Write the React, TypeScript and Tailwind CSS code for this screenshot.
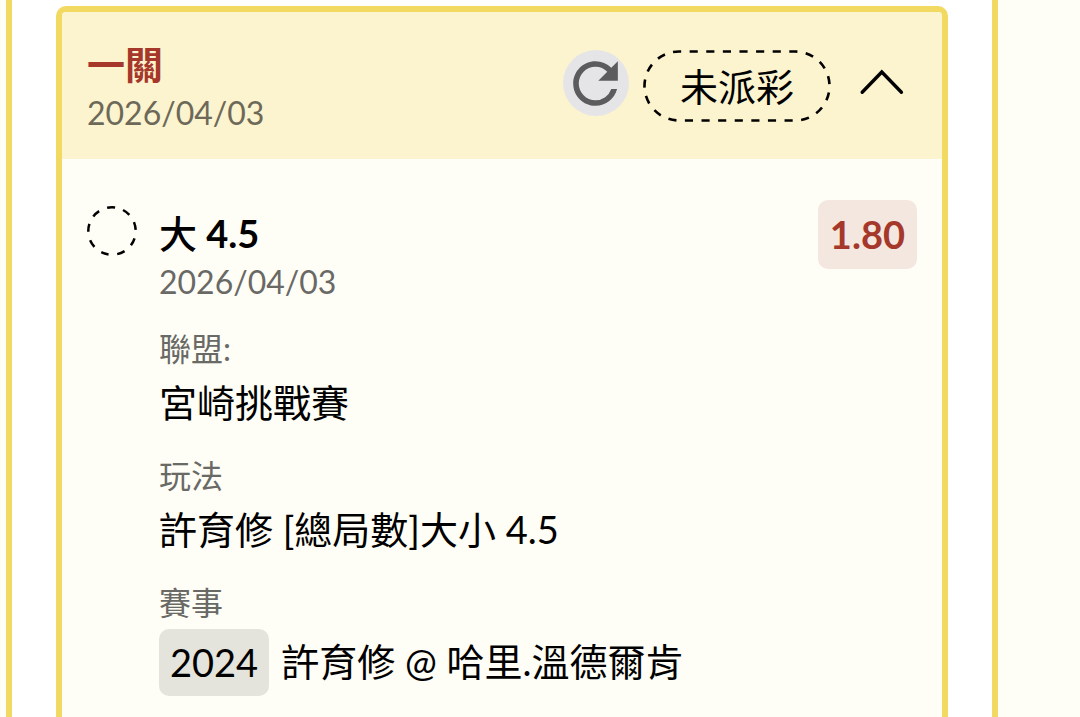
import { ReactNode, useState } from "react";

function RefreshIcon() {
  return (
    <svg viewBox="0 0 24 24" className="size-[67px] shrink-0 fill-[#5c5c5e]" aria-hidden="true">
      <path d="M17.65 6.35A7.958 7.958 0 0 0 12 4c-4.42 0-7.99 3.58-7.99 8s3.57 8 7.99 8c3.73 0 6.84-2.55 7.73-6h-2.08A5.99 5.99 0 0 1 12 18c-3.31 0-6-2.69-6-6s2.69-6 6-6c1.66 0 3.14.69 4.22 1.78L13 11h7V4l-2.35 2.35z" />
    </svg>
  );
}

function StatusPill({ children }: { children: ReactNode }) {
  return (
    <span className="relative flex h-[72px] items-center px-[37px] text-[38px]">
      <svg
        viewBox="0 0 188 72"
        preserveAspectRatio="none"
        className="absolute inset-0 size-full fill-none stroke-black"
        aria-hidden="true"
      >
        <rect
          x="1.5"
          y="1.5"
          width="185"
          height="69"
          rx="34.5"
          strokeWidth="2.6"
          pathLength="270"
          strokeDasharray="4.9 5.1"
          strokeDashoffset="3.6"
        />
      </svg>
      {children}
    </span>
  );
}

function PendingCircle() {
  return (
    <svg viewBox="0 0 50 50" className="mt-1.5 size-[50px] shrink-0 fill-none stroke-black" aria-hidden="true">
      <circle
        cx="25"
        cy="25"
        r="23.7"
        strokeWidth="2.5"
        pathLength="90"
        strokeDasharray="4.8 5.2"
        transform="rotate(18 25 25)"
      />
    </svg>
  );
}

function Field({ label, children }: { label: string; children: ReactNode }) {
  return (
    <div>
      <dt className="text-[32px] leading-[44px] text-[#696966]">{label}</dt>
      <dd className="flex min-h-[62px] items-center text-[38px] leading-[62px]">{children}</dd>
    </div>
  );
}

export default function App() {
  const [open, setOpen] = useState(true);

  return (
    <div className="h-screen overflow-hidden bg-[#fffef6] pr-[82px] pl-1.5 font-['Lato','Noto_Sans_CJK_TC',sans-serif] text-black">
      <main className="flex min-h-full flex-col border-x-6 border-[#f2d961] bg-white px-11 pt-1.5">
        <article className="flex grow flex-col rounded-t-[10px] border-6 border-b-0 border-[#f2d961] bg-[#fffef6]">
          <header className="flex items-start justify-between rounded-t-[4px] bg-[#fcf3cf] px-[25px] pt-[27px] pb-[22px]">
            <div>
              <h2 className="text-[38px] leading-[50px] font-bold text-[#a5382a]">一關</h2>
              <time className="block text-[32px] leading-[48px] text-[#6c6958]">2026/04/03</time>
            </div>
            <div className="mt-[11px] flex items-center">
              <button
                type="button"
                aria-label="重新整理"
                className="mr-3.5 mb-1.5 flex size-[66px] items-center justify-center rounded-full bg-[#e5e5e8]"
              >
                <RefreshIcon />
              </button>
              <StatusPill>未派彩</StatusPill>
              <button
                type="button"
                aria-label="收合"
                aria-expanded={open}
                onClick={() => setOpen(!open)}
                className="mr-3 ml-6 flex h-[72px] w-[50px] items-center justify-center"
              >
                <svg
                  viewBox="0 0 50 50"
                  className="mb-2 size-[50px] fill-none stroke-black"
                  strokeWidth="3.4"
                  aria-hidden="true"
                >
                  <path d="M7.200 35.200 26.800 15 46.400 35.200" strokeLinecap="round" />
                </svg>
              </button>
            </div>
          </header>

          {open && (
            <section className="flex items-start gap-[22px] px-[25px] pt-[41px] pb-8">
              <PendingCircle />
              <div className="grow pt-2">
                <h3 className="text-[38px] leading-[50px] font-bold">
                  <span className="font-medium">大</span> 4.5
                </h3>
                <time className="block text-[32px] leading-[48px] text-[#696966]">2026/04/03</time>
                <dl className="mt-[21px] flex flex-col gap-[21px]">
                  <Field label="聯盟:">宮崎挑戰賽</Field>
                  <Field label="玩法">許育修 [總局數]大小 4.5</Field>
                  <Field label="賽事">
                    <span className="mt-1 mr-3 rounded-[10px] bg-[#e4e3dc] px-[11px] leading-[67px]">2024</span>
                    <span>許育修 @ 哈里.溫德爾肯</span>
                  </Field>
                </dl>
              </div>
              <strong className="rounded-[10px] bg-[#f3e7e0] px-3 text-[38px] leading-[69px] font-bold text-[#a5382a]">
                1.80
              </strong>
            </section>
          )}
        </article>
      </main>
    </div>
  );
}
